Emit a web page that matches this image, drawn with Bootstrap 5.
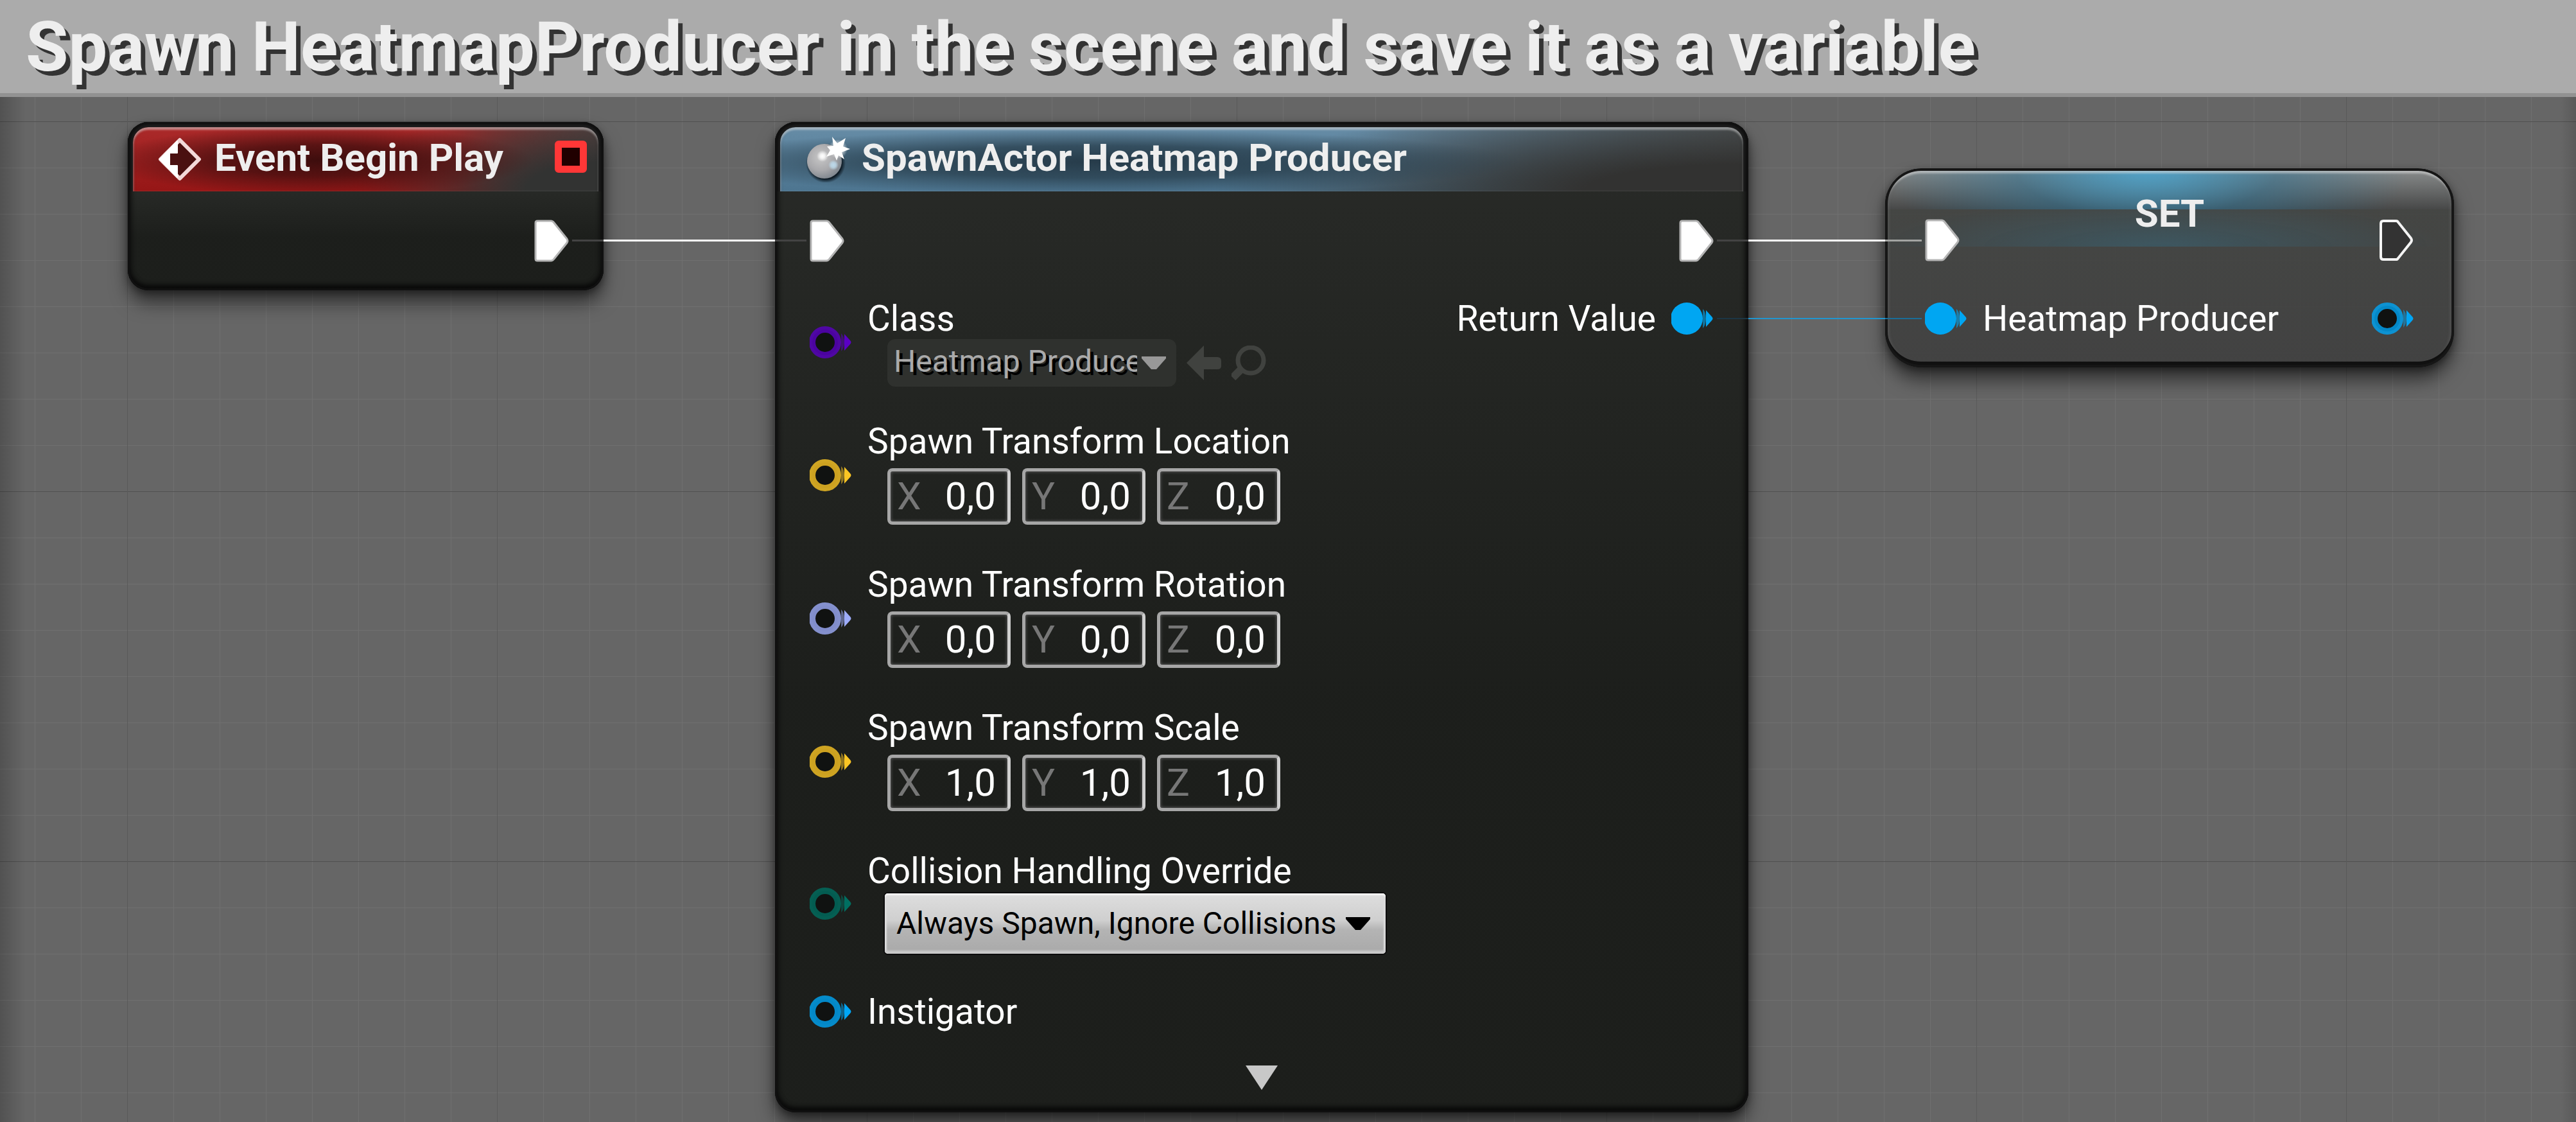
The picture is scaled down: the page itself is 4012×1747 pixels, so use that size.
<!DOCTYPE html>
<html lang="en">
<head>
<meta charset="utf-8">
<meta name="viewport" content="width=device-width, initial-scale=1">
<title>Spawn HeatmapProducer</title>
<link rel="stylesheet" href="https://cdn.jsdelivr.net/npm/bootstrap@5.3.0/dist/css/bootstrap.min.css">
<script src="https://cdn.jsdelivr.net/npm/bootstrap@5.3.0/dist/js/bootstrap.bundle.min.js"></script>
<style>
  body { font-family: Roboto, "Liberation Sans", sans-serif; background: #676767; color: #fff; }

  /* comment bar */
  .comment-bar { background: #ababab; border-bottom: 6px solid #929292; padding: 10px 40px 8px; }
  .comment-bar h1 { font-size: 108px; line-height: 127px; font-weight: 700; color: #eee; text-shadow: 7px 7px 0 #333; white-space: nowrap; }

  /* graph canvas with minor (72px) and major (576px) grid */
  .graph {
    min-height: 1596px;
    background-color: #666;
    background-image:
      linear-gradient(90deg, rgba(0,0,0,.2), transparent 40px, transparent calc(100% - 24px), rgba(0,0,0,.12)),
      linear-gradient(90deg, #5a5a5a 1px, transparent 1px),
      linear-gradient(#505050 1px, transparent 1px),
      linear-gradient(90deg, #707070 1px, transparent 1px),
      linear-gradient(#707070 1px, transparent 1px);
    background-size: 100% 100%, 576px 576px, 576px 576px, 72px 72px, 72px 72px;
    background-position: 0 0, 198px 0, 0 38px, 54px 0, 0 38px;
  }

  .bp-node { position: absolute; border-radius: 32px; box-shadow: 0 20px 28px rgba(0,0,0,.5), 0 4px 12px rgba(0,0,0,.4); }
  .bp-solid { background: linear-gradient(rgba(38,40,37,.98) 108px, rgba(27,29,26,.98) var(--fade)); }
  .bp-solid::after { content: ""; position: absolute; inset: 0; border-radius: inherit; pointer-events: none;
    box-shadow: inset 0 0 0 3px #101010, inset 0 0 8px 4px #0c0c0c, inset 0 -6px 8px #020202; }
  .node-event { left: 199px; top: 39px; width: 741px; min-height: 262px; --fade: 180px; }
  .node-spawn { left: 1207px; top: 39px; width: 1516px; min-height: 1542px; --fade: 900px; }
  .node-set { left: 2936px; top: 111px; width: 886px; min-height: 310px; border-radius: 56px; padding: 37px 62px 0;
    background:
      radial-gradient(ellipse 46% 240% at 46% 0, rgba(78,165,205,.95), rgba(45,115,150,.5) 50%, transparent) 0 0 / 100% 64px no-repeat,
      linear-gradient(#8c8f8f, #474848) 0 0 / 100% 64px no-repeat,
      radial-gradient(ellipse 50% 130% at 48% 100%, rgba(56,98,115,.6), transparent) 0 64px / 100% 58px no-repeat,
      linear-gradient(rgba(67,69,66,.94), rgba(64,64,64,.94));
  }
  .node-set::after { content: ""; position: absolute; inset: 0; border-radius: inherit; pointer-events: none;
    box-shadow: inset 0 0 0 4px #161616, inset 0 -7px 0 2px #101010, inset 0 8px 3px rgba(255,255,255,.42), inset 0 0 4px 6px rgba(110,110,110,.4); }

  .node-head { min-height: 100px; margin: 0 8px; padding: 14px 18px 14px 37px; border-radius: 24px 24px 0 0; box-shadow: inset 0 4px 3px rgba(255,255,255,.5), inset 2px 0 3px rgba(255,255,255,.15); }
  .head-wrap { padding-top: 8px; border-radius: 32px 32px 0 0; background: #222; }
  .head-event { background:
      radial-gradient(ellipse 46% 54% at 40% 52%, rgba(56,12,12,.95), rgba(64,14,14,.75) 45%, transparent),
      radial-gradient(ellipse 52% 150% at 100% 100%, #323332 30%, rgba(50,51,50,.5) 65%, transparent),
      linear-gradient(90deg, transparent 70%, rgba(80,80,78,.8)),
      linear-gradient(#ab2a2a, #961616); }
  .head-spawn { background:
      radial-gradient(ellipse 44% 50% at 33% 54%, rgba(36,56,70,.95), rgba(38,60,74,.75) 50%, transparent),
      radial-gradient(ellipse 55% 140% at 100% 100%, #323231 30%, rgba(50,50,49,.5) 65%, transparent),
      linear-gradient(90deg, transparent 60%, rgba(80,80,78,.85) 100%),
      linear-gradient(#668ca6, #4d7590); }
  .node-title { font-size: 60px; line-height: 68px; font-weight: 700; color: #eee; white-space: nowrap; }
  .head-gap { gap: 18px; }
  .delegate { width: 50px; height: 50px; border: 11px solid #ff3737; border-radius: 6px; background: #200000; }

  .node-body { padding: 44px 54px 0; }
  .pin-stack { gap: 53px; }
  .exec-row { height: 69px; }
  .pin-row { gap: 24px; }
  .pin { width: 66px; height: 50px; flex: none; display: block; overflow: visible; }
  .exec { width: 54px; height: 66px; flex: none; display: block; }
  .pin-label { font-size: 55px; line-height: 64px; white-space: nowrap; display: block; }
  .vec-row { padding-bottom: 8px; }
  .vec-fields { gap: 18px; margin: 10px 0 0 31px; }
  .vec-box { width: 192px; height: 88px; border: 5px solid #a6a6a6; border-right-color: #cfcfcf; border-radius: 8px; padding: 0 18px 0 10px; font-size: 60px; box-shadow: inset 0 0 4px 1px #555; }
  .vec-box label { color: #777; line-height: 70px; }
  .vec-box input { width: 100%; min-width: 0; background: transparent; border: 0; padding: 0; color: #fff; text-align: right; outline: 0; line-height: 70px; }

  .pick { appearance: none; border: 0; font-size: 48px; line-height: 56px; display: block; }
  .pick-wrap svg { position: absolute; pointer-events: none; }
  .class-tools { margin-left: 31px; height: 74px; }
  .pick-class { width: 450px; height: 74px; padding: 0 61px 4px 10px; border-radius: 12px; background: #2f312e; color: #aaa; text-shadow: 5px 5px 0 #000; overflow: hidden; opacity: 1; }
  .tool-btn { border: 0; background: none; padding: 0; width: 54px; height: 54px; color: #40423f; }
  .class-tools .tool-btn { margin-left: 16px; }
  .pick-collision { width: 780px; height: 94px; margin: 3px 0 5px 27px; padding: 0 70px 0 18px; color: #000; border-radius: 5px;
    background: linear-gradient(#dedede, #cfcfcf 45%, #b4b4b4 60%, #a9a9a9); box-shadow: inset 0 3px 2px #f4f4f4, inset 0 -5px 3px #cacaca, inset 3px 0 2px #ddd, inset -3px 0 2px #ddd, 0 0 0 2px #0d0d0d; }
  .more-btn { border: 0; background: none; padding: 0; display: block; margin: 52px auto 0; line-height: 0; }

  .set-top { height: 108px; }
  .set-data { margin-top: 57px; }
  .wires { position: absolute; left: 0; top: 0; width: 100%; height: 100%; pointer-events: none; }
</style>
</head>
<body class="d-flex flex-column min-vh-100">

<svg width="0" height="0" class="position-absolute" aria-hidden="true">
  <defs>
    <symbol id="exec-full" viewBox="0 0 54 66">
      <path d="M5 2h21q3 0 5 3l20 25q2 3 0 6L31 61q-2 3-5 3H5q-3 0-3-3V5q0-3 3-3z" fill="#fff" stroke="#b4b4b4" stroke-width="3"/>
    </symbol>
    <symbol id="exec-open" viewBox="0 0 54 66">
      <path d="M6 3h20q2 0 3 2l20 25q2 3 0 6L29 61q-1 2-3 2H6q-4 0-4-4V7q0-4 4-4z" fill="#333" stroke="#f4f4f4" stroke-width="4"/>
    </symbol>
    <symbol id="pin-open" viewBox="0 0 66 50">
      <circle cx="24" cy="25" r="20" fill="#101211"/>
      <circle cx="24" cy="25" r="20" fill="none" stroke="currentColor" stroke-width="10" stroke-opacity=".8"/>
      <path d="M49 11q5 5 5 14t-5 14z" fill="currentColor" fill-opacity=".5"/>
      <path d="M54 12l9 10q3 3 0 6l-9 10z" fill="currentColor"/>
    </symbol>
    <symbol id="pin-full" viewBox="0 0 66 50">
      <circle cx="24" cy="25" r="25" fill="currentColor"/>
      <path d="M49 10q5 5 5 15t-5 15z" fill="currentColor" fill-opacity=".6"/>
      <path d="M54 12l9 10q3 3 0 6l-9 10z" fill="currentColor"/>
    </symbol>
    <radialGradient id="ball" cx=".4" cy=".38" r=".65">
      <stop offset="0" stop-color="#c8c8c8"/><stop offset=".6" stop-color="#a9a9ac"/><stop offset="1" stop-color="#7f868e"/>
    </radialGradient>
    <radialGradient id="glow"><stop offset="0" stop-color="#fff"/><stop offset=".4" stop-color="#fff" stop-opacity=".8"/><stop offset="1" stop-color="#fff" stop-opacity="0"/></radialGradient>
    <radialGradient id="glow-blue"><stop offset="0" stop-color="#bcd9ea"/><stop offset=".5" stop-color="#bcd9ea" stop-opacity=".8"/><stop offset="1" stop-color="#bcd9ea" stop-opacity="0"/></radialGradient>
    <radialGradient id="ball-shadow"><stop offset=".8" stop-color="#0d1a24"/><stop offset="1" stop-color="#0d1a24" stop-opacity="0"/></radialGradient>
  </defs>
</svg>

<header class="comment-bar"><h1 class="m-0">Spawn HeatmapProducer in the scene and save it as a variable</h1></header>

<main class="graph position-relative flex-grow-1 overflow-hidden">

  <section class="bp-node bp-solid node-event">
    <div class="head-wrap">
      <div class="node-head head-event d-flex align-items-center head-gap">
        <svg width="72" height="72" viewBox="0 0 72 72" aria-hidden="true">
          <path d="M36 6L66 36 36 66 6 36z" fill="#4a1010" stroke="#f3d9d9" stroke-width="6" stroke-linejoin="round"/>
          <path d="M32 8v18H20v20h12v18L5 36z" fill="#fff" stroke="#fff" stroke-width="2" stroke-linejoin="round"/>
        </svg>
        <h2 class="node-title m-0 pb-1">Event Begin Play</h2>
        <span class="delegate ms-auto mb-2"></span>
      </div>
    </div>
    <div class="node-body d-flex justify-content-end">
      <svg class="exec"><use href="#exec-full"/></svg>
    </div>
  </section>

  <section class="bp-node bp-solid node-spawn">
    <div class="head-wrap">
      <div class="node-head head-spawn d-flex align-items-center head-gap">
        <svg width="72" height="72" viewBox="0 0 72 72" aria-hidden="true">
          <circle cx="34" cy="42" r="31" fill="url(#ball-shadow)"/>
          <circle cx="32" cy="39" r="27" fill="url(#ball)"/>
          <circle cx="29" cy="31" r="9" fill="url(#glow)"/>
          <circle cx="46" cy="45" r="8" fill="url(#glow-blue)"/>
          <circle cx="53" cy="20" r="15" fill="url(#glow)"/>
          <path d="M44 1l8 10L65 3l-4 13 11 4-13 5 4 11-9-6-3 8-4-10-12 4 6-10-5-6 10-1z" fill="#fff"/>
        </svg>
        <h2 class="node-title m-0 pb-1">SpawnActor Heatmap Producer</h2>
      </div>
    </div>
    <div class="node-body d-flex justify-content-between">
      <div class="d-flex flex-column pin-stack">
        <div class="exec-row"><svg class="exec"><use href="#exec-full"/></svg></div>

        <div class="d-flex align-items-center pin-row">
          <svg class="pin" color="#5a00c4"><use href="#pin-open"/></svg>
          <div>
            <label class="pin-label" for="cls">Class</label>
            <div class="class-tools d-flex align-items-center">
              <div class="pick-wrap position-relative">
                <select id="cls" class="pick pick-class"><option>Heatmap Producer</option></select>
                <svg class="top-50 end-0 translate-middle-y me-3" width="38" height="20" viewBox="0 0 38 20"><path d="M0 0h38v3L23 20h-8L0 3z" fill="#989898"/></svg>
              </div>
              <button class="tool-btn" type="button" aria-label="Use selected asset"><svg class="d-block" width="54" height="54" viewBox="0 0 54 54"><path d="M27 0v18h21q6 0 6 6v8q0 5-6 5H27v17L0 27z" fill="currentColor"/></svg></button>
              <button class="tool-btn" type="button" aria-label="Browse to asset"><svg class="d-block" width="54" height="54" viewBox="0 0 54 54"><circle cx="30" cy="23" r="20" fill="none" stroke="currentColor" stroke-width="7"/><path d="M14 38L2 50" stroke="currentColor" stroke-width="12"/></svg></button>
            </div>
          </div>
        </div>

        <div class="d-flex align-items-center pin-row">
          <svg class="pin" color="#fbc524"><use href="#pin-open"/></svg>
          <div class="vec-row">
            <span class="pin-label">Spawn Transform Location</span>
            <div class="d-flex vec-fields">
              <div class="vec-box d-flex align-items-center"><label for="lx">X</label><input id="lx" value="0,0"></div>
              <div class="vec-box d-flex align-items-center"><label for="ly">Y</label><input id="ly" value="0,0"></div>
              <div class="vec-box d-flex align-items-center"><label for="lz">Z</label><input id="lz" value="0,0"></div>
            </div>
          </div>
        </div>

        <div class="d-flex align-items-center pin-row">
          <svg class="pin" color="#9dacfa"><use href="#pin-open"/></svg>
          <div class="vec-row">
            <span class="pin-label">Spawn Transform Rotation</span>
            <div class="d-flex vec-fields">
              <div class="vec-box d-flex align-items-center"><label for="rx">X</label><input id="rx" value="0,0"></div>
              <div class="vec-box d-flex align-items-center"><label for="ry">Y</label><input id="ry" value="0,0"></div>
              <div class="vec-box d-flex align-items-center"><label for="rz">Z</label><input id="rz" value="0,0"></div>
            </div>
          </div>
        </div>

        <div class="d-flex align-items-center pin-row">
          <svg class="pin" color="#fbc524"><use href="#pin-open"/></svg>
          <div class="vec-row">
            <span class="pin-label">Spawn Transform Scale</span>
            <div class="d-flex vec-fields">
              <div class="vec-box d-flex align-items-center"><label for="sx">X</label><input id="sx" value="1,0"></div>
              <div class="vec-box d-flex align-items-center"><label for="sy">Y</label><input id="sy" value="1,0"></div>
              <div class="vec-box d-flex align-items-center"><label for="sz">Z</label><input id="sz" value="1,0"></div>
            </div>
          </div>
        </div>

        <div class="d-flex align-items-center pin-row">
          <svg class="pin" color="#006f61"><use href="#pin-open"/></svg>
          <div>
            <label class="pin-label" for="coll">Collision Handling Override</label>
            <div class="pick-wrap position-relative">
              <select id="coll" class="pick pick-collision"><option>Always Spawn, Ignore Collisions</option></select>
              <svg class="top-50 end-0 translate-middle-y me-4" width="38" height="20" viewBox="0 0 38 20"><path d="M0 0h38v3L23 20h-8L0 3z" fill="#000"/></svg>
            </div>
          </div>
        </div>

        <div class="d-flex align-items-center pin-row">
          <svg class="pin" color="#00a6f6"><use href="#pin-open"/></svg>
          <span class="pin-label">Instigator</span>
        </div>
      </div>

      <div class="d-flex flex-column align-items-end pin-stack">
        <div class="exec-row"><svg class="exec"><use href="#exec-full"/></svg></div>
        <div class="d-flex align-items-center pin-row">
          <span class="pin-label">Return Value</span>
          <svg class="pin" color="#00a6f2"><use href="#pin-full"/></svg>
        </div>
      </div>
    </div>
    <button class="more-btn" type="button" aria-label="Show more pins"><svg width="52" height="38" viewBox="0 0 52 38"><path d="M1 0h50L26 38z" fill="#c8c8c8"/></svg></button>
  </section>

  <section class="bp-node node-set">
    <div class="set-top d-flex justify-content-between">
      <svg class="exec align-self-end"><use href="#exec-full"/></svg>
      <h2 class="node-title m-0">SET</h2>
      <svg class="exec align-self-end"><use href="#exec-open"/></svg>
    </div>
    <div class="set-data d-flex align-items-center pin-row">
      <svg class="pin" color="#00a6f2"><use href="#pin-full"/></svg>
      <span class="pin-label">Heatmap Producer</span>
      <svg class="pin ms-auto" color="#00a6f6"><use href="#pin-open"/></svg>
    </div>
  </section>

  <!-- wires: bright between nodes, dimmed where they run over a node -->
  <svg class="wires" aria-hidden="true">
    <g stroke-width="3">
      <path d="M891 223.500H940M1207 223.500H1256M2674 223.500H2723" stroke="#434343"/>
      <path d="M940 223.500H1207M2723 223.500H2936" stroke="#fff"/>
      <path d="M2936 223.500H2993" stroke="#a3a4a2"/>
    </g>
    <g stroke-width="2">
      <path d="M2674 345H2723" stroke="#1c3644"/>
      <path d="M2723 345H2936" stroke="#2196cf"/>
      <path d="M2936 345H2993" stroke="#1a6d97"/>
    </g>
  </svg>
</main>
</body>
</html>
